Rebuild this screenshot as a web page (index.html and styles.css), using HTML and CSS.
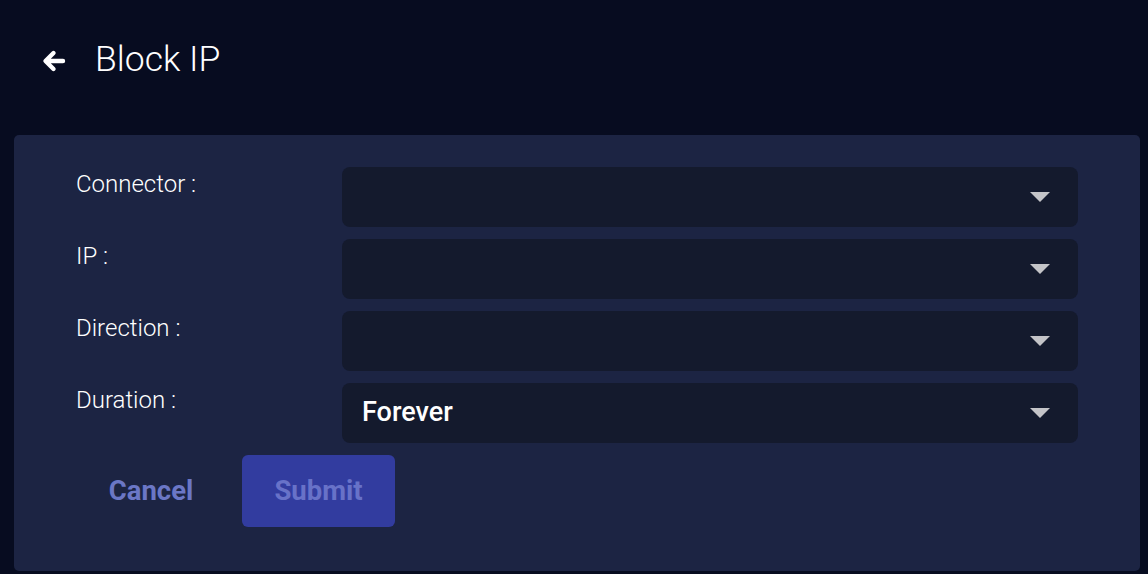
FILE: index.html
```html
<!DOCTYPE html>
<html>
<head>
<meta charset="utf-8">
<link rel="stylesheet" href="styles.css">
</head>
<body>
<div class="page">
  <header class="header">
    <svg class="back" width="24" height="24" viewBox="0 0 24 24">
      <path d="M21 12 H4 M11.5 4 L3.5 12 L11.5 20" fill="none" stroke="#ffffff" stroke-width="4.4" stroke-linecap="round" stroke-linejoin="round"/>
    </svg>
    <h1 class="title">Block IP</h1>
  </header>
  <section class="card">
    <div class="form">
      <div class="label">Connector :</div>
      <div class="select"><span class="value"></span><span class="caret"></span></div>
      <div class="label">IP :</div>
      <div class="select"><span class="value"></span><span class="caret"></span></div>
      <div class="label">Direction :</div>
      <div class="select"><span class="value"></span><span class="caret"></span></div>
      <div class="label">Duration :</div>
      <div class="select"><span class="value">Forever</span><span class="caret"></span></div>
    </div>
    <div class="actions">
      <button class="btn cancel">Cancel</button>
      <button class="btn submit">Submit</button>
    </div>
  </section>
</div>
</body>
</html>
```
FILE: styles.css
```css
* { box-sizing: border-box; }
html, body { margin: 0; padding: 0; }
body {
  background: #070c20;
  font-family: Roboto, "Liberation Sans", sans-serif;
  color: #ffffff;
  width: 1148px;
  height: 574px;
  overflow: hidden;
}
.page {
  padding: 0 8px 0 14px;
}
.header {
  height: 135px;
  display: flex;
  align-items: flex-start;
  padding-top: 37px;
  padding-left: 28px;
}
.back {
  margin-top: 12px;
  flex: none;
}
.title {
  margin: 0 0 0 29px;
  font-size: 35.5px;
  font-weight: 300;
  line-height: 44px;
}
.card {
  background: #1c2443;
  border-radius: 5px;
  height: 436px;
  padding: 32px 62px 0 62px;
}
.form {
  display: grid;
  grid-template-columns: 266px 1fr;
  row-gap: 12px;
}
.label {
  font-size: 24px;
  font-weight: 300;
  line-height: 28px;
  padding-top: 3px;
}
.select {
  height: 60px;
  background: #141a2d;
  border-radius: 8px;
  display: flex;
  align-items: center;
  padding: 0 28px 0 20px;
}
.value {
  flex: 1;
  font-size: 27px;
  font-weight: 500;
  line-height: 32px;
  margin-bottom: 3px;
}
.caret {
  width: 0;
  height: 0;
  border-left: 10px solid transparent;
  border-right: 10px solid transparent;
  border-top: 10px solid #c4c4c8;
}
.actions {
  display: flex;
  gap: 16px;
  margin-top: 12px;
}
.btn {
  width: 153px;
  height: 72px;
  border: none;
  border-radius: 6px;
  font-family: Roboto, "Liberation Sans", sans-serif;
  font-size: 27.5px;
  font-weight: 700;
  padding: 0 0 2px 0;
}
.cancel {
  background: transparent;
  color: #6b77c6;
  width: 150px;
}
.submit {
  background: #323c9f;
  color: #6872c8;
}
```
